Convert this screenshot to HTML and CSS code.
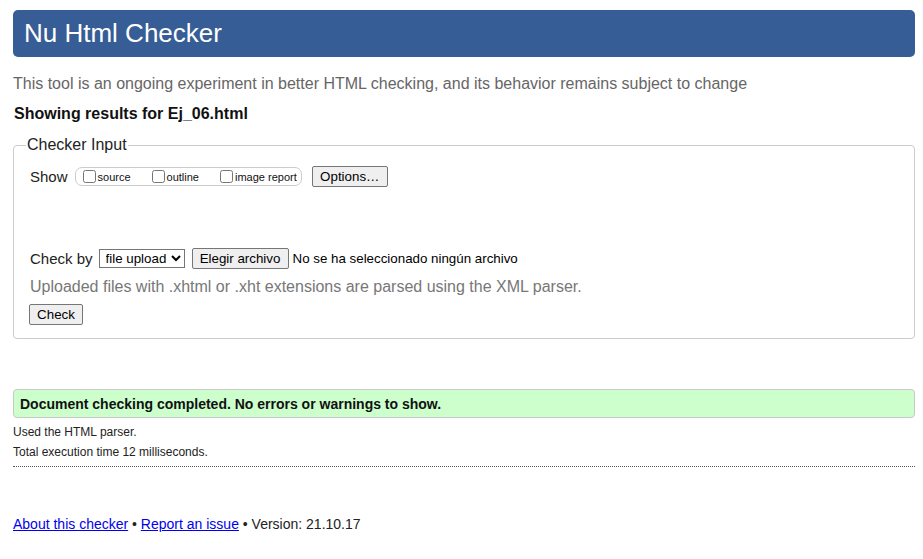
FILE: index.html
```html
<!DOCTYPE html>
<html lang="en">
<head>
<meta charset="utf-8">
<title>Nu Html Checker</title>
<link rel="stylesheet" href="styles.css">
</head>
<body>
<div class="page">
  <h1 class="title">Nu Html Checker</h1>
  <p class="intro">This tool is an ongoing experiment in better HTML checking, and its behavior remains subject to change</p>
  <p class="showing">Showing results for Ej_06.html</p>
  <form class="checker-form" onsubmit="return false">
    <fieldset class="input-set">
      <legend class="input-legend">Checker Input</legend>
      <div class="row show-row">
        <span class="row-label">Show</span>
        <span class="opts">
          <label class="opt"><input type="checkbox" class="cb">source</label>
          <label class="opt"><input type="checkbox" class="cb">outline</label>
          <label class="opt opt-last"><input type="checkbox" class="cb">image report</label>
        </span>
        <button type="button" class="btn btn-options">Options…</button>
      </div>
      <div class="row by-row">
        <span class="row-label">Check by</span>
        <select class="sel"><option>file upload</option></select>
        <button type="button" class="btn btn-file">Elegir archivo</button>
        <span class="nofile">No se ha seleccionado ningún archivo</span>
      </div>
      <p class="note">Uploaded files with .xhtml or .xht extensions are parsed using the XML parser.</p>
      <button type="button" class="btn btn-check">Check</button>
    </fieldset>
  </form>
  <p class="success">Document checking completed. No errors or warnings to show.</p>
  <div class="details">
    <p class="detail">Used the HTML parser.</p>
    <p class="detail">Total execution time 12 milliseconds.</p>
  </div>
  <p class="footer"><a href="#" class="flink">About this checker</a> • <a href="#" class="flink">Report an issue</a> • Version: 21.10.17</p>
</div>
</body>
</html>
```
FILE: styles.css
```css
html, body {
  margin: 0;
  background: #fff;
}
body {
  font-family: "Liberation Sans", Arial, sans-serif;
  color: #000;
}
.page {
  padding: 10px 8px 20px 13px;
}
.title {
  margin: 0;
  height: 47px;
  line-height: 47px;
  font-size: 26px;
  font-weight: normal;
  color: #fff;
  background: #365d95;
  border-radius: 5px;
  padding-left: 11px;
}
.intro {
  margin: 18px 0 0;
  font-size: 16px;
  color: #666;
}
.showing {
  margin: 12px 0 0 1px;
  font-size: 16px;
  font-weight: bold;
  color: #111;
}
.checker-form {
  margin: 0;
}
.input-set {
  margin: 13px 0 0;
  padding: 12px 16px 13px 16px;
  border: 1px solid #ccc;
  border-radius: 4px;
  min-width: 0;
}
.input-legend {
  padding: 0 1px;
  margin-left: -4px;
  font-size: 16px;
  color: #222;
}
.row {
  display: flex;
  align-items: center;
}
.row-label {
  font-size: 15px;
  color: #222;
}
.show-row {
  height: 21px;
}
.opts {
  display: inline-flex;
  align-items: center;
  height: 17px;
  margin-left: 7px;
  padding: 0 4px 0 3px;
  border: 1px solid #ccc;
  border-radius: 7px;
}
.opt {
  display: inline-flex;
  align-items: center;
  font-size: 11px;
  color: #111;
  margin-right: 17px;
}
.opt-last {
  margin-right: 0;
}
.cb {
  width: 13px;
  height: 13px;
  margin: 0 2px 0 4px;
}
.btn {
  font-family: "Liberation Sans", Arial, sans-serif;
  font-size: 13.333px;
  color: #000;
  background: #efefef;
  border: 1px solid #767676;
  border-radius: 2px;
  padding: 1px 6px;
  height: 21px;
  line-height: 16px;
}
.btn-options {
  margin-left: 10px;
  width: 76px;
}
.by-row {
  margin-top: 61px;
}
.sel {
  margin-left: 6px;
  width: 86px;
  height: 19px;
  font-family: "Liberation Sans", Arial, sans-serif;
  font-size: 13.333px;
  color: #000;
  background: #fff;
  border: 1px solid #767676;
  border-radius: 0;
  padding: 0 0 0 2px;
}
.btn-file {
  margin-left: 7px;
  width: 97px;
}
.nofile {
  margin-left: 4px;
  font-size: 13.333px;
  color: #000;
}
.note {
  margin: 9px 0 0;
  font-size: 16px;
  color: #777;
}
.btn-check {
  display: block;
  margin: 8px 0 0 -1px;
  width: 54px;
}
.success {
  margin: 50px 0 0;
  padding: 6px 6px 5px;
  line-height: 16px;
  font-size: 14px;
  font-weight: bold;
  color: #111;
  background: #ccffcc;
  border: 1px solid #c8c8c8;
  border-radius: 4px;
}
.details {
  margin-top: 4px;
  padding-bottom: 4px;
  border-bottom: 1px dotted #555;
}
.detail {
  margin: 0;
  font-size: 12px;
  line-height: 20px;
  color: #222;
}
.footer {
  margin: 49px 0 0;
  font-size: 14px;
  color: #222;
}
.flink {
  color: #0000ee;
}
```
